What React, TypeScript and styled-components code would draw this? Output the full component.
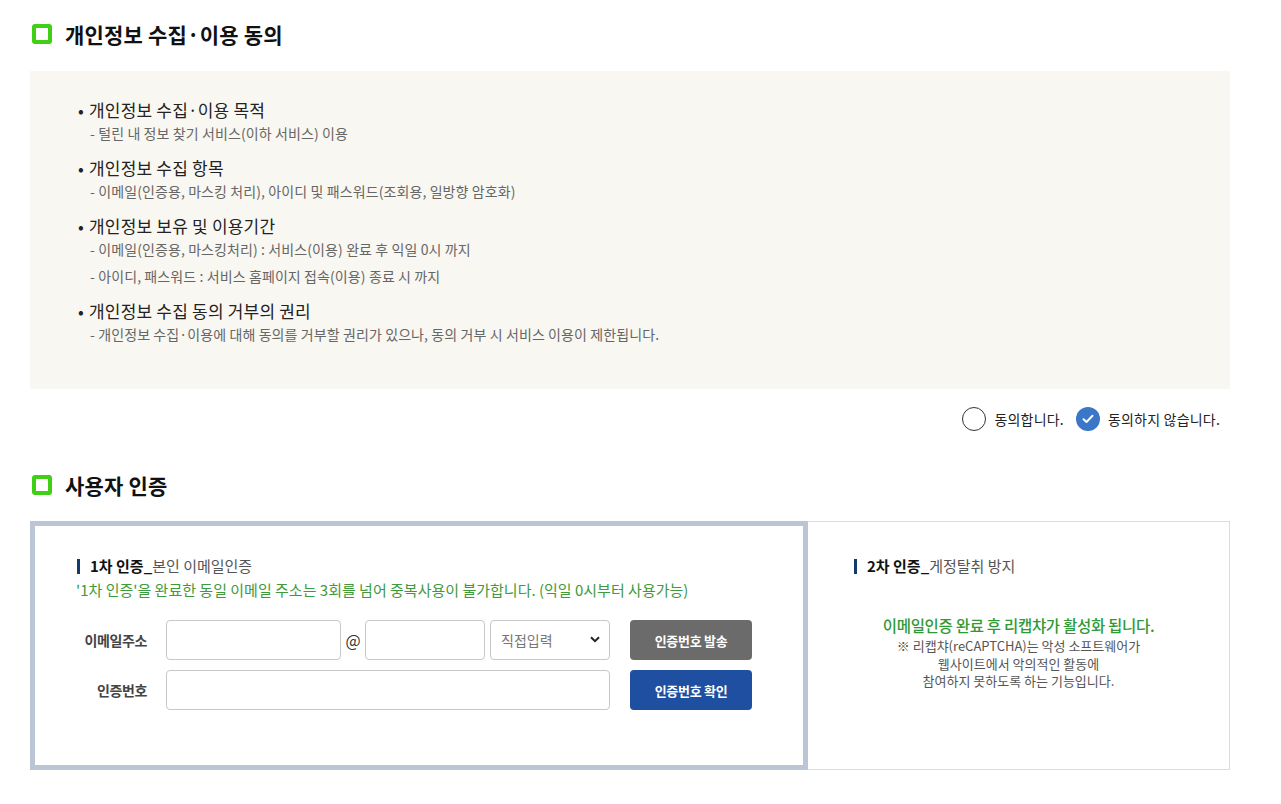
import { FC } from 'react';
import styled, { createGlobalStyle } from 'styled-components';

const GlobalStyle = createGlobalStyle`
  body {
    margin: 0;
    background: #fff;
    font-family: "Noto Sans CJK KR", "Noto Sans", sans-serif;
    color: #222;
  }
  * { box-sizing: border-box; }
`;

const Page = styled.div`
  width: 1200px;
  margin-left: 30px;
  padding-top: 19px;
  padding-bottom: 30px;
`;

const SectionTitle = styled.h2<{ $top?: number }>`
  display: flex;
  align-items: center;
  gap: 13px;
  margin: ${(p) => p.$top ?? 0}px 0 0 2px;
  height: 30px;
  font-size: 21px;
  font-weight: 700;
  color: #111;
  letter-spacing: 0.2px;
`;

const TitleMark = styled.span`
  width: 20px;
  height: 20px;
  border: 4px solid #3fd015;
  border-radius: 3px;
  flex-shrink: 0;
`;

const InfoBox = styled.div`
  margin-top: 22px;
  background: #f9f7f1;
  padding: 27px 48px 44px;
`;

const Item = styled.div`
  & + & {
    margin-top: 12px;
  }
`;

const ItemHead = styled.div`
  font-size: 17px;
  line-height: 24px;
  color: #222;
  letter-spacing: 0.2px;
  &::before {
    content: '•';
    margin-right: 5px;
  }
`;

const ItemSub = styled.div`
  font-size: 14px;
  line-height: 22px;
  color: #666;
  padding-left: 12px;
  letter-spacing: 0.1px;
  & + & {
    margin-top: 5px;
  }
`;

const AgreeRow = styled.div`
  display: flex;
  justify-content: flex-end;
  align-items: center;
  gap: 12px;
  margin-top: 18px;
  padding-right: 10px;
`;

const RadioLabel = styled.label`
  display: flex;
  align-items: center;
  gap: 8px;
  font-size: 14px;
  color: #222;
  letter-spacing: 0.2px;
`;

const RadioDot = styled.span<{ $checked?: boolean }>`
  width: 24px;
  height: 24px;
  border-radius: 50%;
  border: ${(p) => (p.$checked ? 'none' : '1.5px solid #333')};
  background: ${(p) => (p.$checked ? '#3a77c9' : '#fff')};
  display: flex;
  align-items: center;
  justify-content: center;
`;

const AuthWrap = styled.div`
  margin-top: 21px;
  display: flex;
  height: 249px;
`;

const FirstPanel = styled.div`
  width: 778px;
  border: 5px solid #bac5d6;
  padding: 29px 0 0 42px;
`;

const SecondPanel = styled.div`
  flex: 1;
  border: 1px solid #dcdcdc;
  border-left: none;
  padding: 33px 0 0 46px;
`;

const PanelHead = styled.div`
  display: flex;
  align-items: center;
  font-size: 15px;
  line-height: 22px;
  letter-spacing: 0;
  &::before {
    content: '';
    width: 3px;
    height: 15px;
    background: #14396b;
    margin-right: 10px;
  }
  b {
    font-weight: 700;
    color: #111;
  }
  span {
    color: #555;
  }
`;

const Notice = styled.p`
  margin: 2px 0 0 -1px;
  font-size: 15px;
  line-height: 22px;
  color: #3e9a3b;
`;

const Form = styled.div`
  margin-top: 19px;
  display: flex;
  flex-direction: column;
  gap: 10px;
`;

const FormRow = styled.div`
  display: flex;
  align-items: center;
`;

const FieldLabel = styled.div`
  width: 70px;
  text-align: right;
  font-size: 14px;
  font-weight: 700;
  color: #444;
  margin-right: 19px;
  letter-spacing: -0.4px;
`;

const TextInput = styled.input<{ $w: number }>`
  width: ${(p) => p.$w}px;
  height: 40px;
  border: 1px solid #c8c8c8;
  border-radius: 4px;
  background: #fff;
  padding: 0 10px;
  font-family: inherit;
  font-size: 14px;
`;

const At = styled.span`
  width: 24px;
  text-align: center;
  font-size: 16px;
  color: #333;
`;

const SelectBox = styled.div`
  position: relative;
  width: 120px;
  height: 40px;
  margin-left: 5px;
`;

const Select = styled.select`
  appearance: none;
  width: 100%;
  height: 100%;
  border: 1px solid #c8c8c8;
  border-radius: 4px;
  background: #fff;
  padding: 0 10px;
  font-family: inherit;
  font-size: 14px;
  color: #777;
`;

const Chevron = styled.svg`
  position: absolute;
  right: 10px;
  top: 16px;
  pointer-events: none;
`;

const ActionButton = styled.button<{ $tone: 'gray' | 'blue' }>`
  margin-left: 20px;
  width: 122px;
  height: 40px;
  border: none;
  border-radius: 4px;
  background: ${(p) => (p.$tone === 'gray' ? '#6b6b6b' : '#1f4fa1')};
  color: #fff;
  font-family: inherit;
  font-size: 13px;
  font-weight: 700;
  letter-spacing: -0.3px;
`;

const CaptchaInfo = styled.div`
  margin: 36px 0 0 -46px;
  text-align: center;
`;

const CaptchaLead = styled.div`
  font-size: 15.5px;
  line-height: 24px;
  font-weight: 500;
  color: #2f9a35;
  letter-spacing: -0.3px;
`;

const CaptchaNote = styled.div`
  font-size: 13px;
  line-height: 17.5px;
  color: #555;
  letter-spacing: 0;
`;

const items = [
  { head: '개인정보 수집·이용 목적', subs: ['- 털린 내 정보 찾기 서비스(이하 서비스) 이용'] },
  {
    head: '개인정보 수집 항목',
    subs: ['- 이메일(인증용, 마스킹 처리), 아이디 및 패스워드(조회용, 일방향 암호화)'],
  },
  {
    head: '개인정보 보유 및 이용기간',
    subs: [
      '- 이메일(인증용, 마스킹처리) : 서비스(이용) 완료 후 익일 0시 까지',
      '- 아이디, 패스워드 : 서비스 홈페이지 접속(이용) 종료 시 까지',
    ],
  },
  {
    head: '개인정보 수집 동의 거부의 권리',
    subs: ['- 개인정보 수집·이용에 대해 동의를 거부할 권리가 있으나, 동의 거부 시 서비스 이용이 제한됩니다.'],
  },
];

const App: FC = () => {
  return (
    <>
      <GlobalStyle />
      <Page>
        <SectionTitle>
          <TitleMark />
          개인정보 수집·이용 동의
        </SectionTitle>
        <InfoBox>
          {items.map((it) => (
            <Item key={it.head}>
              <ItemHead>{it.head}</ItemHead>
              {it.subs.map((s) => (
                <ItemSub key={s}>{s}</ItemSub>
              ))}
            </Item>
          ))}
        </InfoBox>
        <AgreeRow>
          <RadioLabel>
            <RadioDot />
            동의합니다.
          </RadioLabel>
          <RadioLabel>
            <RadioDot $checked>
              <svg width="12" height="10" viewBox="0 0 12 10">
                <path d="M1.5 5.2 L4.5 8 L10.5 1.8" fill="none" stroke="#fff" strokeWidth="2" strokeLinecap="round" strokeLinejoin="round" />
              </svg>
            </RadioDot>
            동의하지 않습니다.
          </RadioLabel>
        </AgreeRow>

        <SectionTitle $top={39}>
          <TitleMark />
          사용자 인증
        </SectionTitle>
        <AuthWrap>
          <FirstPanel>
            <PanelHead>
              <b>1차 인증_</b>
              <span>본인 이메일인증</span>
            </PanelHead>
            <Notice>'1차 인증'을 완료한 동일 이메일 주소는 3회를 넘어 중복사용이 불가합니다. (익일 0시부터 사용가능)</Notice>
            <Form>
              <FormRow>
                <FieldLabel>이메일주소</FieldLabel>
                <TextInput $w={175} />
                <At>@</At>
                <TextInput $w={120} />
                <SelectBox>
                  <Select defaultValue="direct">
                    <option value="direct">직접입력</option>
                  </Select>
                  <Chevron width="10" height="7" viewBox="0 0 10 7">
                    <path d="M1 1.2 L5 5.2 L9 1.2" fill="none" stroke="#222" strokeWidth="2" />
                  </Chevron>
                </SelectBox>
                <ActionButton $tone="gray">인증번호 발송</ActionButton>
              </FormRow>
              <FormRow>
                <FieldLabel>인증번호</FieldLabel>
                <TextInput $w={444} />
                <ActionButton $tone="blue">인증번호 확인</ActionButton>
              </FormRow>
            </Form>
          </FirstPanel>
          <SecondPanel>
            <PanelHead>
              <b>2차 인증_</b>
              <span>게정탈취 방지</span>
            </PanelHead>
            <CaptchaInfo>
              <CaptchaLead>이메일인증 완료 후 리캡챠가 활성화 됩니다.</CaptchaLead>
              <CaptchaNote>※ 리캡챠(reCAPTCHA)는 악성 소프트웨어가</CaptchaNote>
              <CaptchaNote>웹사이트에서 악의적인 활동에</CaptchaNote>
              <CaptchaNote>참여하지 못하도록 하는 기능입니다.</CaptchaNote>
            </CaptchaInfo>
          </SecondPanel>
        </AuthWrap>
      </Page>
    </>
  );
};

export default App;
